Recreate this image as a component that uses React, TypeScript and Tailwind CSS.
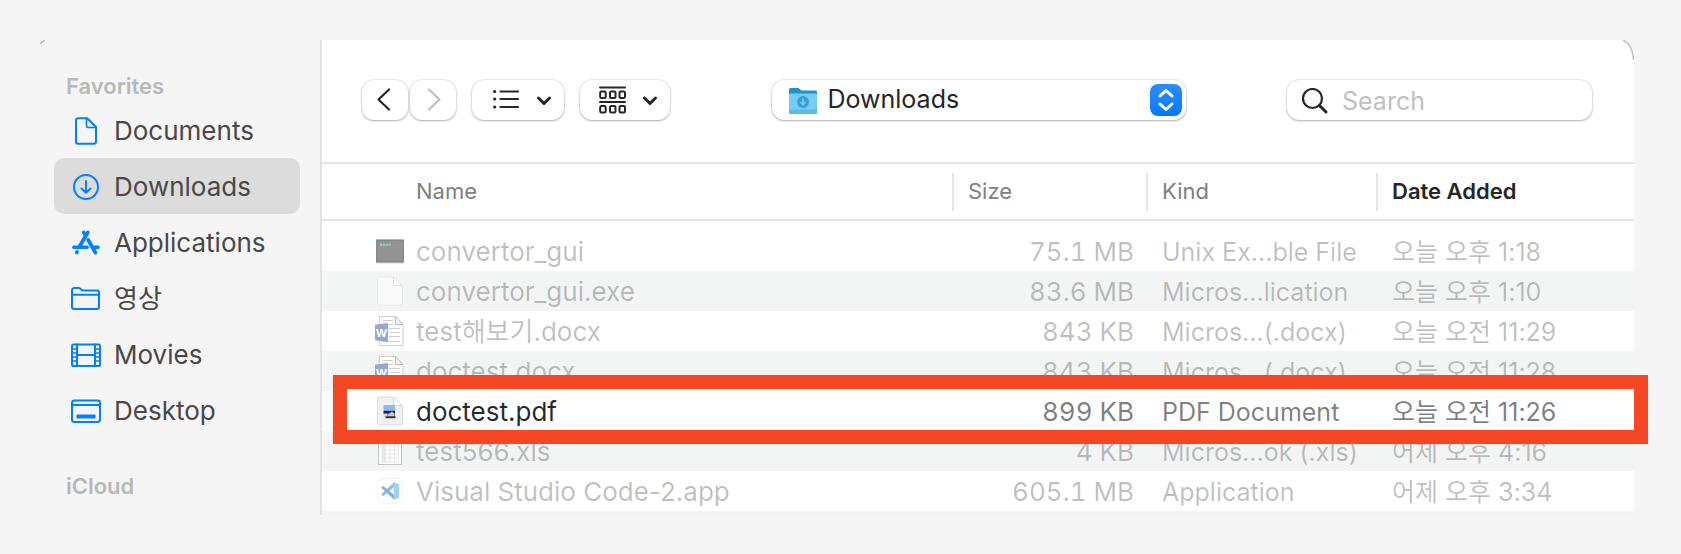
import { useState } from "react";
import type { ReactNode } from "react";

type FileItem = {
  name: string;
  size: string;
  kind: string;
  dateAdded: string;
  icon: ReactNode;
  enabled?: boolean;
};

const stroke = {
  fill: "none",
  stroke: "currentColor",
  strokeLinecap: "round" as const,
  strokeLinejoin: "round" as const,
};

function DocumentIcon() {
  return (
    <svg className="size-7" viewBox="0 0 28 28" strokeWidth="2" {...stroke}>
      <path d="M6 1.2h9.2L24 10v14.8a2 2 0 0 1-2 2H6a2 2 0 0 1-2-2V3.2a2 2 0 0 1 2-2Z" />
      <path d="M14.5 1.5V9a1.5 1.5 0 0 0 1.5 1.5h7.8" strokeWidth="1.6" />
    </svg>
  );
}

function DownloadIcon() {
  return (
    <svg className="size-7" viewBox="0 0 28 28" strokeWidth="2" {...stroke}>
      <circle cx="14" cy="14" r="12" />
      <path d="M14 8v11.5M9.5 15.5 14 19.8l4.5-4.3" />
    </svg>
  );
}

function ApplicationsIcon() {
  return (
    <svg className="size-7" viewBox="0 0 28 28" {...stroke}>
      <path d="M1.8 18.3h13.4M20.5 18.3h5.7" strokeWidth="3.4" />
      <path d="M15.8 3.4 7.8 17M4.8 23.4l.3-.5" strokeWidth="3.8" />
      <path d="m11.6 3.2 1.8 3" strokeWidth="3.4" />
      <path d="m16.2 11 7.2 12.6" strokeWidth="3.8" />
    </svg>
  );
}

function FolderIcon() {
  return (
    <svg className="size-7 overflow-visible" viewBox="0 0 28 28" strokeWidth="2" {...stroke}>
      <path d="M0 5.2A2.2 2.2 0 0 1 2.2 3h5l3.2 2.4h14.4A2.2 2.2 0 0 1 27 7.6v14.2a2.2 2.2 0 0 1-2.2 2.2H2.2A2.2 2.2 0 0 1 0 21.8Z" />
      <path d="M0 9.8h27" />
    </svg>
  );
}

function MoviesIcon() {
  return (
    <svg className="size-7 overflow-visible" viewBox="0 0 28 28" strokeWidth="2" {...stroke}>
      <rect x="0" y="3.5" width="28" height="21.5" rx="1.6" />
      <path d="M5 3.5V25M23 3.5V25M5 14h18" />
      <path d="M1 8h3M1 12h3M1 16h3M1 20h3M24 8h3M24 12h3M24 16h3M24 20h3" strokeWidth="1.7" />
    </svg>
  );
}

function DesktopIcon() {
  return (
    <svg className="size-7 overflow-visible" viewBox="0 0 28 28" strokeWidth="2" {...stroke}>
      <rect x="0" y="3.5" width="28" height="21.5" rx="2.4" />
      <path d="M0 8h28" />
      <rect x="4.5" y="17.5" width="19" height="4" rx=".8" fill="currentColor" stroke="none" />
    </svg>
  );
}

function ExecIcon() {
  return (
    <svg className="size-[30px]" viewBox="0 0 30 30">
      <rect x="1" y="3.5" width="28" height="24" fill="#d3d8d8" />
      <rect x="1.8" y="4.2" width="26.4" height="21.6" fill="#939393" stroke="#808585" strokeWidth="1.4" />
      <path d="M5 8.7h11" stroke="#8fd19a" strokeWidth="2.4" strokeDasharray="2.2 .7" />
    </svg>
  );
}

function BlankFileIcon() {
  return (
    <svg className="size-[30px]" viewBox="0 0 30 30">
      <path d="M4.5 1H18l9.5 9v16.5A2.5 2.5 0 0 1 25 29H5a2.5 2.5 0 0 1-2.5-2.5V3a2 2 0 0 1 2-2Z" fill="#fafafa" stroke="#e2e4e4" strokeWidth=".8" />
      <path d="M18.5 1v7A1.5 1.5 0 0 0 20 9.5h7Z" fill="#fff" stroke="#d8dada" strokeWidth=".8" />
    </svg>
  );
}

function WordIcon() {
  return (
    <svg className="size-[30px] overflow-visible" viewBox="0 0 30 30">
      <path d="M4.5.5h16l7.5 8v21H4.5Z" fill="#fff" stroke="#cfcfcf" />
      <path d="M20.5.5v8H28Z" fill="#f4f4f4" stroke="#bdbdbd" />
      <path d="M8 4.5h10M8 8.5h10M14 12.5h11M14 16.5h11M14 20.5h11M8 25.5h17" stroke="#cfcfcf" />
      <path d="M0 8.8 13 7v19L0 24.2Z" fill="#94a8d0" />
      <text x="6.5" y="20.5" fontSize="11" fontWeight="700" textAnchor="middle" fill="#fff">
        W
      </text>
    </svg>
  );
}

function PdfIcon() {
  return (
    <svg className="size-[30px]" viewBox="0 0 30 30">
      <path d="M4.5 1H18l9.5 9v16.5A2.5 2.5 0 0 1 25 29H5a2.5 2.5 0 0 1-2.5-2.5V3a2 2 0 0 1 2-2Z" fill="#f1f1f1" stroke="#d4d4d4" strokeWidth=".8" />
      <path d="M18.5 1v7A1.5 1.5 0 0 0 20 9.5h7Z" fill="#fff" stroke="#cdcdcd" strokeWidth=".8" />
      <rect x="8.5" y="9" width="11.5" height="6" fill="#92b9ee" />
      <rect x="8.5" y="14.8" width="11.5" height="3" fill="#1b2860" />
      <path d="M8.5 17.8H20v3l-11.5.5Z" fill="#d8d5cf" />
      <path d="M12.5 18.5 17 15.5l2.5 2V21H13Z" fill="#c9ccd1" stroke="#55585e" strokeWidth=".7" />
      <path d="M10.5 21.3h10" stroke="#2d3036" strokeWidth="1.8" />
    </svg>
  );
}

function SheetIcon() {
  return (
    <svg className="size-[30px]" viewBox="0 0 30 30">
      <rect x="3.5" y="1.5" width="23" height="27" fill="#fcfcfc" stroke="#c4c6c6" />
      <rect x="6.5" y="6" width="4" height="20" fill="#e9e9e9" />
      <path d="M6.5 6h17M6.5 10h17M6.5 14h17M6.5 18h17M6.5 22h17M6.5 26h17M10.5 6v20M15 6v20M19.5 6v20M23.5 6v20" stroke="#e4e4e4" strokeWidth=".7" />
    </svg>
  );
}

function CodeIcon() {
  return (
    <svg className="size-[30px]" viewBox="0 0 30 30">
      <rect x="2.5" y="2.5" width="25" height="25" rx="5.5" fill="#fff" stroke="#f2f2f2" />
      <path d="M19.5 6v4.8L8.3 20.1 6 18.4Z" fill="#8dbfe6" />
      <path d="M19.5 24v-4.8L8.3 9.9 6 11.6Z" fill="#80b2dc" />
      <path d="m18.8 6 5.2 2.3v13.4L18.8 24Z" fill="#9ccffa" />
    </svg>
  );
}

function DownloadsFolderIcon() {
  return (
    <svg className="h-7 w-[30px]" viewBox="0 0 30 28">
      <path d="M1 2.5A1.5 1.5 0 0 1 2.5 1h8l3 2.5h14A1.5 1.5 0 0 1 29 5v7H1Z" fill="#1f93c8" />
      <path d="M1 8a1.5 1.5 0 0 1 1.5-1.5h25A1.5 1.5 0 0 1 29 8v18a1 1 0 0 1-1 1H2a1 1 0 0 1-1-1Z" fill="#74cdf7" />
      <path d="M1 22.5h28V26a1 1 0 0 1-1 1H2a1 1 0 0 1-1-1Z" fill="#5db9e6" />
      <circle cx="15" cy="15" r="6" fill="#3b9fd3" />
      <path d="M15 11.5v6M12.5 15.3l2.5 2.5 2.5-2.5" fill="none" stroke="#7fd0f6" strokeWidth="1.5" />
    </svg>
  );
}

function ChevronDown() {
  return (
    <svg className="h-3 w-4" viewBox="0 0 16 12" strokeWidth="3" {...stroke}>
      <path d="M2.5 4 8 9.5 13.5 4" />
    </svg>
  );
}

const places = [
  { name: "Documents", icon: <DocumentIcon /> },
  { name: "Downloads", icon: <DownloadIcon /> },
  { name: "Applications", icon: <ApplicationsIcon /> },
  { name: "영상", icon: <FolderIcon /> },
  { name: "Movies", icon: <MoviesIcon /> },
  { name: "Desktop", icon: <DesktopIcon /> },
];

const files: FileItem[] = [
  { name: "convertor_gui", size: "75.1 MB", kind: "Unix Ex...ble File", dateAdded: "오늘 오후 1:18", icon: <ExecIcon /> },
  { name: "convertor_gui.exe", size: "83.6 MB", kind: "Micros...lication", dateAdded: "오늘 오후 1:10", icon: <BlankFileIcon /> },
  { name: "test해보기.docx", size: "843 KB", kind: "Micros...(.docx)", dateAdded: "오늘 오전 11:29", icon: <WordIcon /> },
  { name: "doctest.docx", size: "843 KB", kind: "Micros...(.docx)", dateAdded: "오늘 오전 11:28", icon: <WordIcon /> },
  { name: "doctest.pdf", size: "899 KB", kind: "PDF Document", dateAdded: "오늘 오전 11:26", icon: <PdfIcon />, enabled: true },
  { name: "test566.xls", size: "4 KB", kind: "Micros...ok (.xls)", dateAdded: "어제 오후 4:16", icon: <SheetIcon /> },
  { name: "Visual Studio Code-2.app", size: "605.1 MB", kind: "Application", dateAdded: "어제 오후 3:34", icon: <CodeIcon /> },
];

const control = "h-10 rounded-xl bg-white shadow-[0_0_2px_rgba(0,0,0,0.25),0_1px_2px_rgba(0,0,0,0.25)]";

function Sidebar(props: { current: string; onSelect: (name: string) => void }) {
  return (
    <nav className="w-[282px] shrink-0 border-r-2 border-[#e2e2e2] pt-[30px] pr-5 pb-3 pl-[14px]">
      <h2 className="h-8 pl-3 text-[22px] leading-8 font-semibold text-[#b8b8b8]">Favorites</h2>
      <ul>
        {places.map((place) => (
          <li key={place.name}>
            <button
              type="button"
              onClick={() => props.onSelect(place.name)}
              className={`flex h-14 w-full items-center gap-[14px] rounded-[10px] pt-[2px] pl-[18px] text-left text-[26px] leading-8 text-[#484848] ${
                place.name === props.current ? "bg-[#dcdcdc]" : ""
              }`}
            >
              <span className="text-[#0080ff]">{place.icon}</span>
              <span>{place.name}</span>
            </button>
          </li>
        ))}
      </ul>
      <h2 className="mt-8 h-8 pl-3 text-[22px] leading-8 font-semibold text-[#b8b8b8]">iCloud</h2>
    </nav>
  );
}

function Toolbar(props: { current: string; onSelect: (name: string) => void }) {
  return (
    <div className="flex items-center justify-between border-b-2 border-[#e5e5e5] pt-10 pr-[42px] pb-[42px] pl-10 text-[#262626]">
      <div className="flex gap-4">
        <div className="flex gap-[2px]">
          <button type="button" aria-label="Back" className={`${control} flex w-[46px] items-center justify-center`}>
            <svg className="h-6 w-4" viewBox="0 0 16 24" strokeWidth="2.2" {...stroke}>
              <path d="M12 1.5 1.5 11.5 12 21.5" />
            </svg>
          </button>
          <button type="button" aria-label="Forward" disabled className={`${control} flex w-[46px] items-center justify-center text-[#bfbfbf]`}>
            <svg className="h-6 w-4" viewBox="0 0 16 24" strokeWidth="2.2" {...stroke}>
              <path d="m4 1.5 10.5 10L4 21.5" />
            </svg>
          </button>
        </div>
        <button type="button" aria-label="List view" className={`${control} flex w-[92px] items-center justify-between pr-3 pl-5`}>
          <svg className="h-7 w-7" viewBox="0 0 28 28" strokeWidth="2.2" {...stroke}>
            <path d="M8.5 5.5H26M8.5 13H26M8.5 21H26" />
            <path d="M2.6 5.5h.1M2.6 13h.1M2.6 21h.1" strokeWidth="3.2" />
          </svg>
          <ChevronDown />
        </button>
        <button type="button" aria-label="Group items" className={`${control} flex w-[90px] items-center justify-between pr-3 pl-[18px]`}>
          <svg className="h-7 w-7" viewBox="0 0 28 28" strokeWidth="2" {...stroke}>
            <path d="M2 1.5h25M2 16h25" />
            <rect x="2.2" y="5.5" width="5.5" height="6.5" rx="1.2" />
            <rect x="12" y="5.5" width="5.5" height="6.5" rx="1.2" />
            <rect x="21.5" y="5.5" width="5.5" height="6.5" rx="1.2" />
            <rect x="2.2" y="20" width="5.5" height="6.5" rx="1.2" />
            <rect x="12" y="20" width="5.5" height="6.5" rx="1.2" />
            <rect x="21.5" y="20" width="5.5" height="6.5" rx="1.2" />
          </svg>
          <ChevronDown />
        </button>
      </div>

      <div className="relative w-[414px]">
        <select
          aria-label="Folder"
          value={props.current}
          onChange={(e) => props.onSelect(e.target.value)}
          className={`${control} w-full appearance-none pb-[2px] pl-14 text-[25px] leading-8`}
        >
          {places.map((place) => (
            <option key={place.name}>{place.name}</option>
          ))}
        </select>
        <span className="pointer-events-none absolute top-[7px] left-4">
          <DownloadsFolderIcon />
        </span>
        <span className="pointer-events-none absolute top-1 right-1 flex size-8 items-center justify-center rounded-lg bg-linear-to-b from-[#2a8dff] to-[#007aff] text-white">
          <svg className="size-7" viewBox="0 0 28 28" strokeWidth="3" {...stroke}>
            <path d="M8 10 14 4.5 20 10M8 18l6 5.5 6-5.5" />
          </svg>
        </span>
      </div>

      <div className="relative w-[305px]">
        <svg className="pointer-events-none absolute top-2 left-[14px] size-7" viewBox="0 0 28 28" strokeWidth="2.2" {...stroke}>
          <circle cx="11.5" cy="10.5" r="9.5" />
          <path d="M18.5 17.5 25 24" strokeWidth="3" />
        </svg>
        <input
          type="search"
          aria-label="Search"
          placeholder="Search"
          className={`${control} w-full pt-[2px] pr-4 pl-[55px] text-[25px] leading-8 placeholder:text-[#bfbfbf]`}
        />
      </div>
    </div>
  );
}

function FileTable() {
  return (
    <table className="w-full table-fixed border-collapse text-[25px] leading-8">
      <thead>
        <tr className="h-14 text-left text-[22px] text-[#808080]">
          <th className="border-b-2 border-[#e5e5e5] pb-[2px] pl-[94px] font-normal">Name</th>
          <th className="w-[194px] border-b-2 border-[#e5e5e5] font-normal">
            <div className="h-[38px] border-l-2 border-[#e5e5e5] pl-[14px] leading-9">Size</div>
          </th>
          <th className="w-[230px] border-b-2 border-[#e5e5e5] font-normal">
            <div className="h-[38px] border-l-2 border-[#e5e5e5] pl-[14px] leading-9">Kind</div>
          </th>
          <th className="w-[258px] border-b-2 border-[#e5e5e5] font-semibold text-[#262626]">
            <div className="h-[38px] border-l-2 border-[#e5e5e5] pl-[14px] leading-9">Date Added</div>
          </th>
        </tr>
      </thead>
      <tbody className="before:block before:h-[10px]">
        {files.map((file) => (
          <tr
            key={file.name}
            className={`relative h-10 whitespace-nowrap even:bg-[#f3f5f5] ${file.enabled ? "text-black/50" : "text-black/25"}`}
          >
            <td className="pl-[53px]">
              <div className={`flex h-10 items-center gap-[11px] text-[26px] ${file.enabled ? "text-black/85" : ""}`}>
                {file.icon}
                <span className="pt-px">{file.name}</span>
              </div>
              {file.enabled && (
                <span className="pointer-events-none absolute -top-4 -right-[14px] -bottom-[13px] left-[11px] z-10 border-[14px] border-[#f54723]" />
              )}
            </td>
            <td className="pt-px pr-3 text-right text-[26px] tabular-nums">{file.size}</td>
            <td className="pt-px pl-4">{file.kind}</td>
            <td className="pt-px pl-4">{file.dateAdded}</td>
          </tr>
        ))}
        <tr className="h-1 even:bg-[#f3f5f5]" aria-hidden="true">
          <td colSpan={4} />
        </tr>
      </tbody>
    </table>
  );
}

export default function App() {
  const [current, setCurrent] = useState("Downloads");

  return (
    <div className="min-h-screen bg-[#f5f5f5] py-10 pr-[47px] pl-10 font-[Inter,'Noto_Sans_CJK_KR',sans-serif]">
      <div className="relative flex">
        <svg className="absolute top-0 left-0 size-[6px]" viewBox="0 0 6 6" fill="none" stroke="#bdbdbd" strokeWidth="1.5">
          <path d="M.5 4C1 2 2.5.8 5 .7" />
        </svg>
        <Sidebar current={current} onSelect={setCurrent} />
        <main className="min-w-0 flex-1 rounded-tr-[18px] bg-white">
          <Toolbar current={current} onSelect={setCurrent} />
          <FileTable />
        </main>
        <svg className="absolute top-0 right-0 h-5 w-3" viewBox="0 0 12 20" fill="none" stroke="#c4c4c4" strokeWidth="1.5">
          <path d="M1 0c6 3 10 9 10.5 20" />
        </svg>
      </div>
    </div>
  );
}
